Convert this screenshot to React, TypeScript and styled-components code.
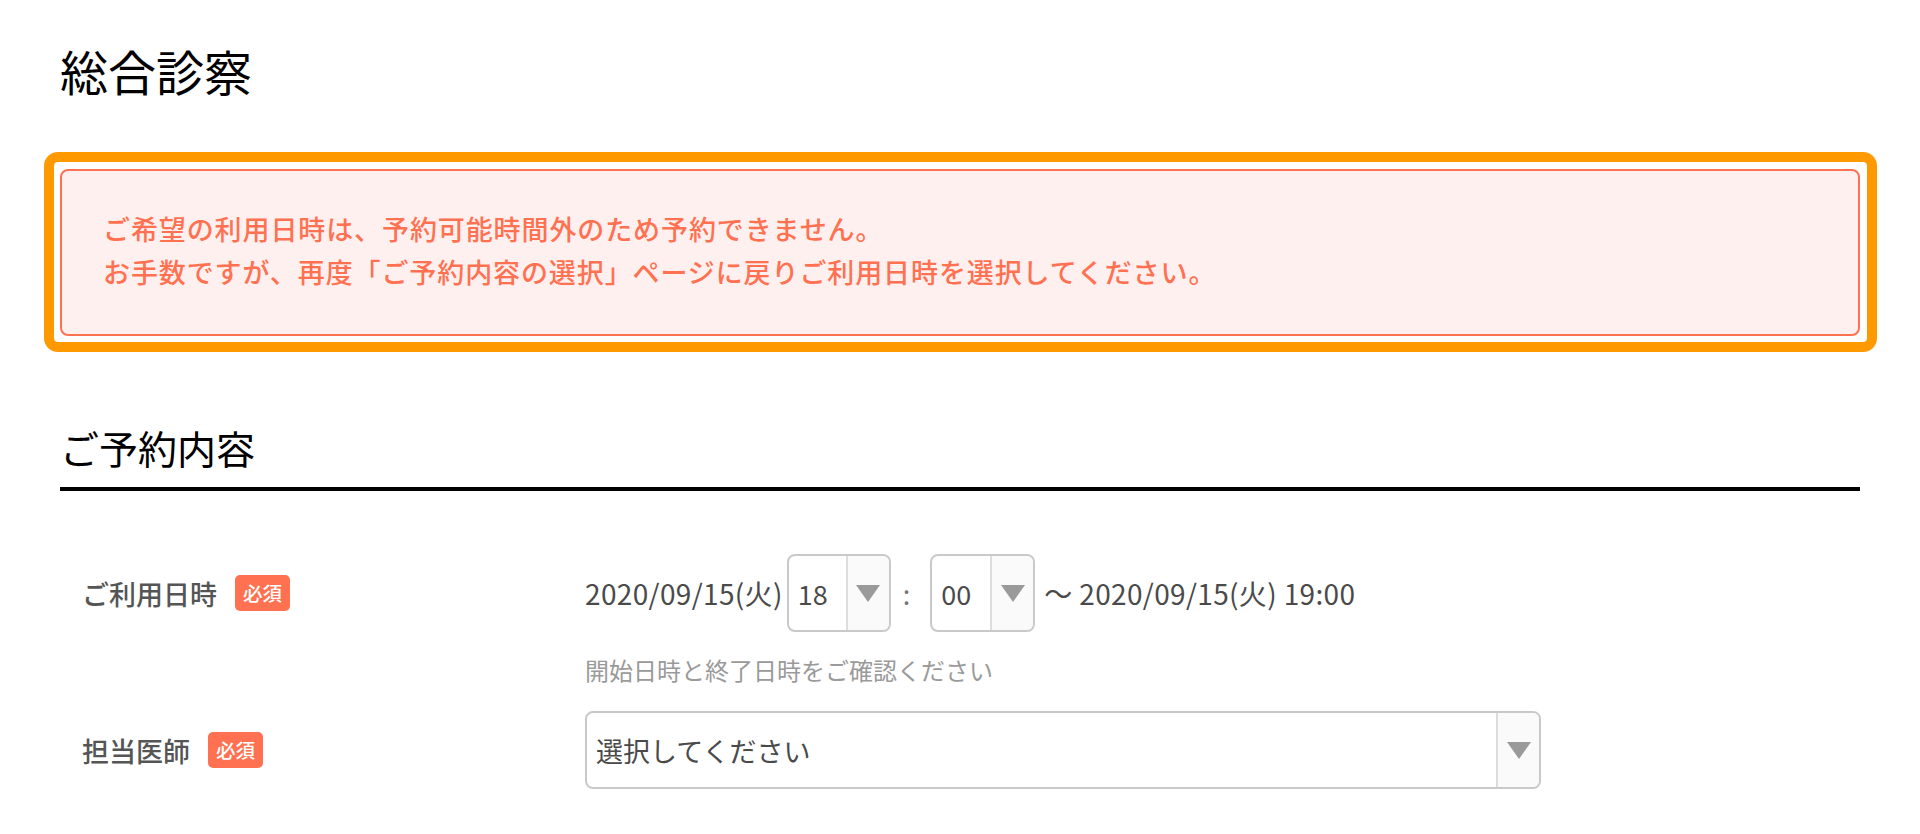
import React from "react";
import styled, { createGlobalStyle } from "styled-components";

const GlobalStyle = createGlobalStyle`
  html,
  body {
    margin: 0;
    padding: 0;
    background: #fff;
  }

  body {
    font-family: "Noto Sans CJK JP", "Noto Sans", sans-serif;
    color: #4a4a4a;
  }
`;

const Page = styled.main`
  box-sizing: border-box;
  width: 1920px;
  padding: 34px 60px 40px;
`;

const PageTitle = styled.h1`
  margin: 0;
  font-size: 48px;
  line-height: 72px;
  font-weight: 400;
  color: #000;
`;

// orange highlight ring around the alert
const Highlight = styled.div`
  margin: 46px -17px 0 -16px;
  padding: 7px 7px 6px 6px;
  border: 10px solid #ff9900;
  border-radius: 14px;
`;

const Alert = styled.div`
  box-sizing: border-box;
  padding: 36px 41px 41px;
  border: 2px solid #ff7150;
  border-radius: 8px;
  background: #fff0f0;
  color: #ff7150;
  font-size: 27px;
  line-height: 1.6;
  font-weight: 500;
  letter-spacing: 0.9px;
`;

const AlertLine = styled.p`
  margin: 0;
`;

const SectionTitle = styled.h2`
  margin: 66px 0 0;
  padding-bottom: 11px;
  border-bottom: 4px solid #000;
  font-size: 39px;
  line-height: 58px;
  font-weight: 400;
  color: #000;
`;

const Form = styled.div`
  display: flex;
  flex-direction: column;
  padding: 63px 0 0 22px;
`;

const Row = styled.div<{ $gap?: number }>`
  display: flex;
  align-items: flex-start;
  margin-top: ${(p) => p.$gap || 0}px;
`;

const LabelCell = styled.div`
  display: flex;
  align-items: center;
  flex: 0 0 503px;
  height: 78px;
`;

const Label = styled.span`
  font-size: 27px;
  line-height: 1;
  font-weight: 500;
  color: #555;
`;

const Required = styled.span`
  margin-left: 18px;
  padding: 0 8px;
  height: 36px;
  border-radius: 5px;
  background: #ff7150;
  color: #fff;
  font-size: 19.5px;
  line-height: 36px;
  font-weight: 500;
`;

const ValueCell = styled.div`
  display: flex;
  flex-direction: column;
`;

const Inline = styled.div`
  display: flex;
  align-items: center;
  color: #4a4a4a;
  white-space: nowrap;
`;

const DateText = styled.span<{ $side: "left" | "right" }>`
  font-size: 28px;
  letter-spacing: 0.35px;
  ${(p) => (p.$side === "left" ? "margin-right: 4px;" : "margin-left: 9px;")}
`;

const Colon = styled.span`
  margin: 0 20px 0 12px;
  color: #777;
  font-size: 27px;
`;

const SelectBox = styled.div<{ $width: number }>`
  box-sizing: border-box;
  display: flex;
  width: ${(p) => p.$width}px;
  height: 78px;
  border: 2px solid #c9c9c9;
  border-radius: 8px;
  background: #fff;
  overflow: hidden;
`;

const SelectValue = styled.span`
  flex: 1;
  display: flex;
  align-items: center;
  padding-left: 9px;
  font-size: 27px;
  color: #4a4a4a;
`;

const ArrowCell = styled.span`
  display: flex;
  align-items: center;
  justify-content: center;
  flex: 0 0 41px;
  border-left: 2px solid #dcdcdc;
  background: #fafafa;

  &::after {
    content: "";
    width: 0;
    height: 0;
    border-left: 12px solid transparent;
    border-right: 12px solid transparent;
    border-top: 17px solid #9a9a9a;
    filter: blur(0.4px);
  }
`;

const Hint = styled.p`
  margin: 20px 0 0;
  font-size: 24px;
  line-height: 36px;
  color: #9a9a9a;
`;

const Select = ({ width, value }: { width: number; value: string }) => (
  <SelectBox $width={width}>
    <SelectValue>{value}</SelectValue>
    <ArrowCell />
  </SelectBox>
);

export default function App() {
  return (
    <>
      <GlobalStyle />
      <Page>
        <PageTitle>総合診察</PageTitle>

        <Highlight>
          <Alert>
            <AlertLine>ご希望の利用日時は、予約可能時間外のため予約できません。</AlertLine>
            <AlertLine>
              お手数ですが、再度「ご予約内容の選択」ページに戻りご利用日時を選択してください。
            </AlertLine>
          </Alert>
        </Highlight>

        <SectionTitle>ご予約内容</SectionTitle>

        <Form>
          <Row>
            <LabelCell>
              <Label>ご利用日時</Label>
              <Required>必須</Required>
            </LabelCell>
            <ValueCell>
              <Inline>
                <DateText $side="left">2020/09/15(火)</DateText>
                <Select width={104} value="18" />
                <Colon>:</Colon>
                <Select width={105} value="00" />
                <DateText $side="right">〜 2020/09/15(火) 19:00</DateText>
              </Inline>
              <Hint>開始日時と終了日時をご確認ください</Hint>
            </ValueCell>
          </Row>

          <Row $gap={23}>
            <LabelCell>
              <Label>担当医師</Label>
              <Required>必須</Required>
            </LabelCell>
            <ValueCell>
              <Select width={956} value="選択してください" />
            </ValueCell>
          </Row>
        </Form>
      </Page>
    </>
  );
}
